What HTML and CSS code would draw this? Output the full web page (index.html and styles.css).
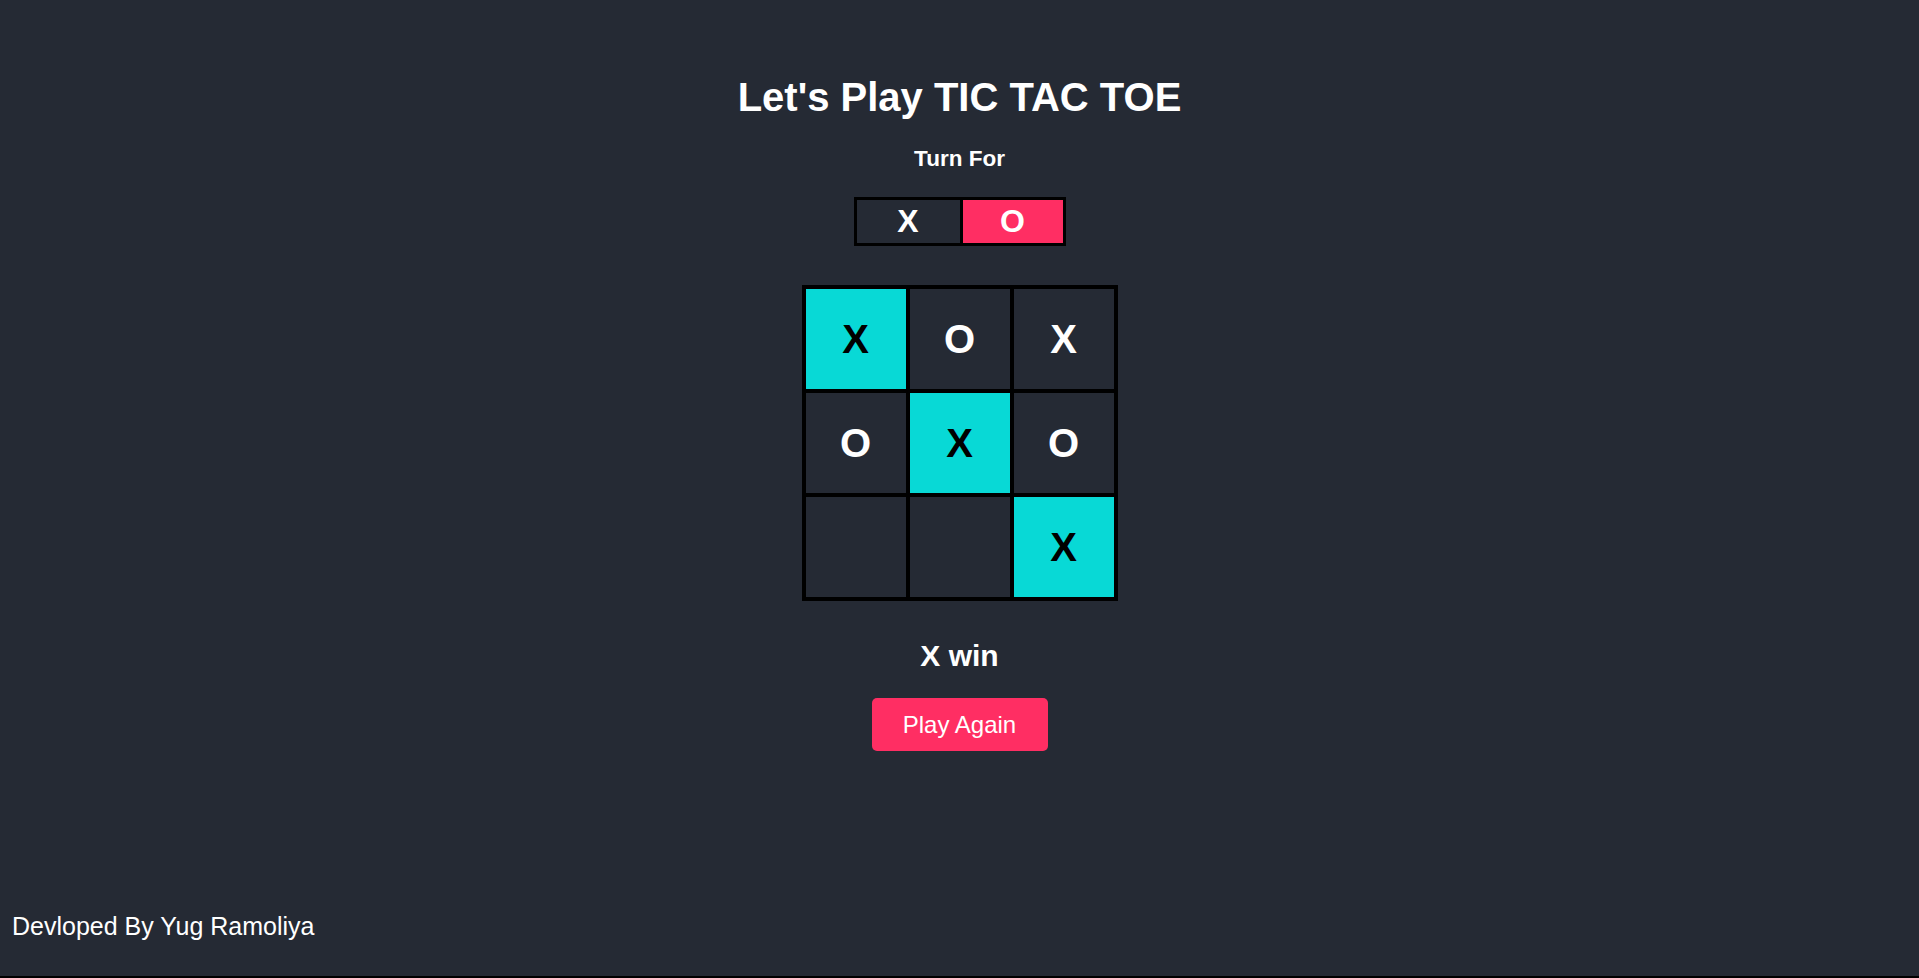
FILE: index.html
```html
<!DOCTYPE html>
<html lang="en">
<head>
<meta charset="UTF-8">
<title>Tic Tac Toe</title>
<link rel="stylesheet" href="styles.css">
</head>
<body>
  <main class="game">
    <h1 class="title">Let's Play TIC TAC TOE</h1>
    <div class="turn-label">Turn For</div>
    <div class="turn-box">
      <div class="turn-cell turn-x">X</div>
      <div class="turn-cell turn-o active">O</div>
    </div>
    <div class="board">
      <div class="cell win">X</div>
      <div class="cell">O</div>
      <div class="cell">X</div>
      <div class="cell">O</div>
      <div class="cell win">X</div>
      <div class="cell">O</div>
      <div class="cell"></div>
      <div class="cell"></div>
      <div class="cell win">X</div>
    </div>
    <div class="result">X win</div>
    <button class="play-again">Play Again</button>
  </main>
  <footer class="footer">Devloped By Yug Ramoliya</footer>
</body>
</html>
```

FILE: styles.css
```css
html {
  background: #000;
}

body {
  margin: 0;
  min-height: calc(100vh - 2px);
  background: #252A34;
  color: #fff;
  font-family: "Liberation Sans", Arial, sans-serif;
  display: flex;
  flex-direction: column;
}

.game {
  display: flex;
  flex-direction: column;
  align-items: center;
  padding-top: 75px;
}

.title {
  margin: 0;
  font-size: 40px;
  font-weight: 700;
  line-height: normal;
}

.turn-label {
  margin-top: 26px;
  font-size: 22.5px;
  font-weight: 700;
}

.turn-box {
  margin-top: 25px;
  display: flex;
  border: 3px solid #000;
}

.turn-cell {
  height: 43px;
  display: flex;
  align-items: center;
  justify-content: center;
  font-size: 32px;
  font-weight: 700;
}

.turn-x {
  width: 103px;
}

.turn-o {
  width: 100px;
  border-left: 3px solid #000;
}

.turn-cell.active {
  background: #FF2E63;
}

.board {
  margin-top: 39px;
  display: grid;
  grid-template-columns: repeat(3, 104px);
  grid-auto-rows: 104px;
  border: 2px solid #000;
}

.cell {
  box-sizing: border-box;
  border: 2px solid #000;
  display: flex;
  align-items: center;
  justify-content: center;
  font-size: 40px;
  font-weight: 700;
  color: #fff;
}

.cell.win {
  background: #08D9D6;
  color: #000;
}

.result {
  margin-top: 38px;
  font-size: 30px;
  font-weight: 700;
}

.play-again {
  margin-top: 25px;
  width: 176px;
  height: 53px;
  border: none;
  border-radius: 5px;
  background: #FF2E63;
  color: #fff;
  font-family: "Liberation Sans", Arial, sans-serif;
  font-size: 24px;
  padding: 0;
  cursor: pointer;
}

.footer {
  margin-top: auto;
  padding: 0 0 35px 12px;
  font-size: 25px;
}
```
